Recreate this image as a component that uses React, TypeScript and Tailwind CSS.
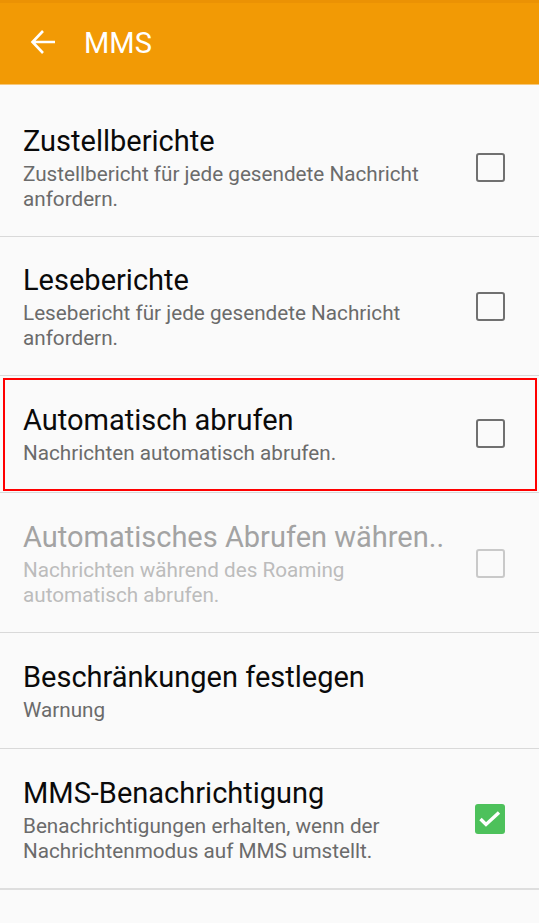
import React from "react";

type State = "off" | "on" | "disabled" | "none";
type Item = {
  title: string;
  sub: string[];
  state: State;
  pt: string;
  pb: string;
  highlight?: boolean;
  divider?: string;
};

function Checkbox({ state }: { state: State }) {
  if (state === "on") {
    return (
      <div className="w-[30px] h-[30px] rounded-[3px] bg-[#4dc15b] relative">
        <svg className="absolute inset-0" width="30" height="30" viewBox="0 0 30 30" fill="none">
          <path d="M5.5 15 L11 20.5 L24 8.5" stroke="#ffffff" strokeWidth="3.4" strokeLinecap="butt" strokeLinejoin="miter" />
        </svg>
      </div>
    );
  }
  const color = state === "disabled" ? "border-[#c9c9c9]" : "border-[#707070]";
  return <div className={`w-[29px] h-[29px] rounded-[3px] border-[2.5px] ${color} bg-transparent`} />;
}

export default function App() {
  const items: Item[] = [
    {
      title: "Zustellberichte",
      sub: ["Zustellbericht für jede gesendete Nachricht", "anfordern."],
      state: "off",
      pt: "pt-[40px]",
      pb: "pb-[24px]",
    },
    {
      title: "Leseberichte",
      sub: ["Lesebericht für jede gesendete Nachricht", "anfordern."],
      state: "off",
      pt: "pt-[27px]",
      pb: "pb-[24px]",
    },
    {
      title: "Automatisch abrufen",
      sub: ["Nachrichten automatisch abrufen."],
      state: "off",
      pt: "pt-[28px]",
      pb: "pb-[26px]",
      highlight: true,
    },
    {
      title: "Automatisches Abrufen währen..",
      sub: ["Nachrichten während des Roaming", "automatisch abrufen."],
      state: "disabled",
      pt: "pt-[28px]",
      pb: "pb-[24px]",
    },
    {
      title: "Beschränkungen festlegen",
      sub: ["Warnung"],
      state: "none",
      pt: "pt-[28px]",
      pb: "pb-[25px]",
    },
    {
      title: "MMS-Benachrichtigung",
      sub: ["Benachrichtigungen erhalten, wenn der", "Nachrichtenmodus auf MMS umstellt."],
      state: "on",
      pt: "pt-[28px]",
      pb: "pb-[24px]",
      divider: "border-b-[2px] border-[#dedede]",
    },
  ];

  return (
    <div
      className="w-[539px] h-[923px] bg-[#fafafa] flex flex-col overflow-hidden"
      style={{ fontFamily: "Roboto, 'Noto Sans', sans-serif" }}
    >
      <div className="h-[85px] shrink-0 bg-[#f29a05] border-t-[3px] border-[#eb9204] border-b border-b-[#f6c77a] flex items-center">
        <div className="w-[84px] flex justify-center pl-[1px] -mt-[3px]">
          <svg width="26" height="26" viewBox="0 0 26 26" fill="none">
            <path d="M2.5 13 H25 M13 2 L2.5 13 L13 24" stroke="#ffffff" strokeWidth="2.6" strokeLinecap="butt" strokeLinejoin="miter" />
          </svg>
        </div>
        <div className="text-white text-[29px] leading-none -mt-[1px]">MMS</div>
      </div>
      {items.map((it, i) => {
        const disabled = it.state === "disabled";
        return (
          <div
            key={i}
            className={`relative shrink-0 flex items-center pl-[23px] pr-[34px] ${it.pt} ${it.pb} ${it.divider ?? "border-b border-[#d9d9d9]"}`}
          >
            <div className="flex-1 min-w-0">
              <div className={`text-[29px] leading-[32px] whitespace-nowrap ${disabled ? "text-[#a3a3a3]" : "text-[#0a0a0a]"}`}>
                {it.title}
              </div>
              <div className={`mt-[5px] text-[20.7px] leading-[25px] ${disabled ? "text-[#bcbcbc]" : "text-[#6b6b6b]"}`}>
                {it.sub.map((s, j) => (
                  <div key={j} className="whitespace-nowrap">{s}</div>
                ))}
              </div>
            </div>
            {it.state !== "none" && (
              <div className="mb-[3px]">
                <Checkbox state={it.state} />
              </div>
            )}
            {it.highlight && (
              <div className="absolute left-[3px] right-[2px] top-[2px] bottom-[1px] border-2 border-[#ff0000] pointer-events-none" />
            )}
          </div>
        );
      })}
    </div>
  );
}
